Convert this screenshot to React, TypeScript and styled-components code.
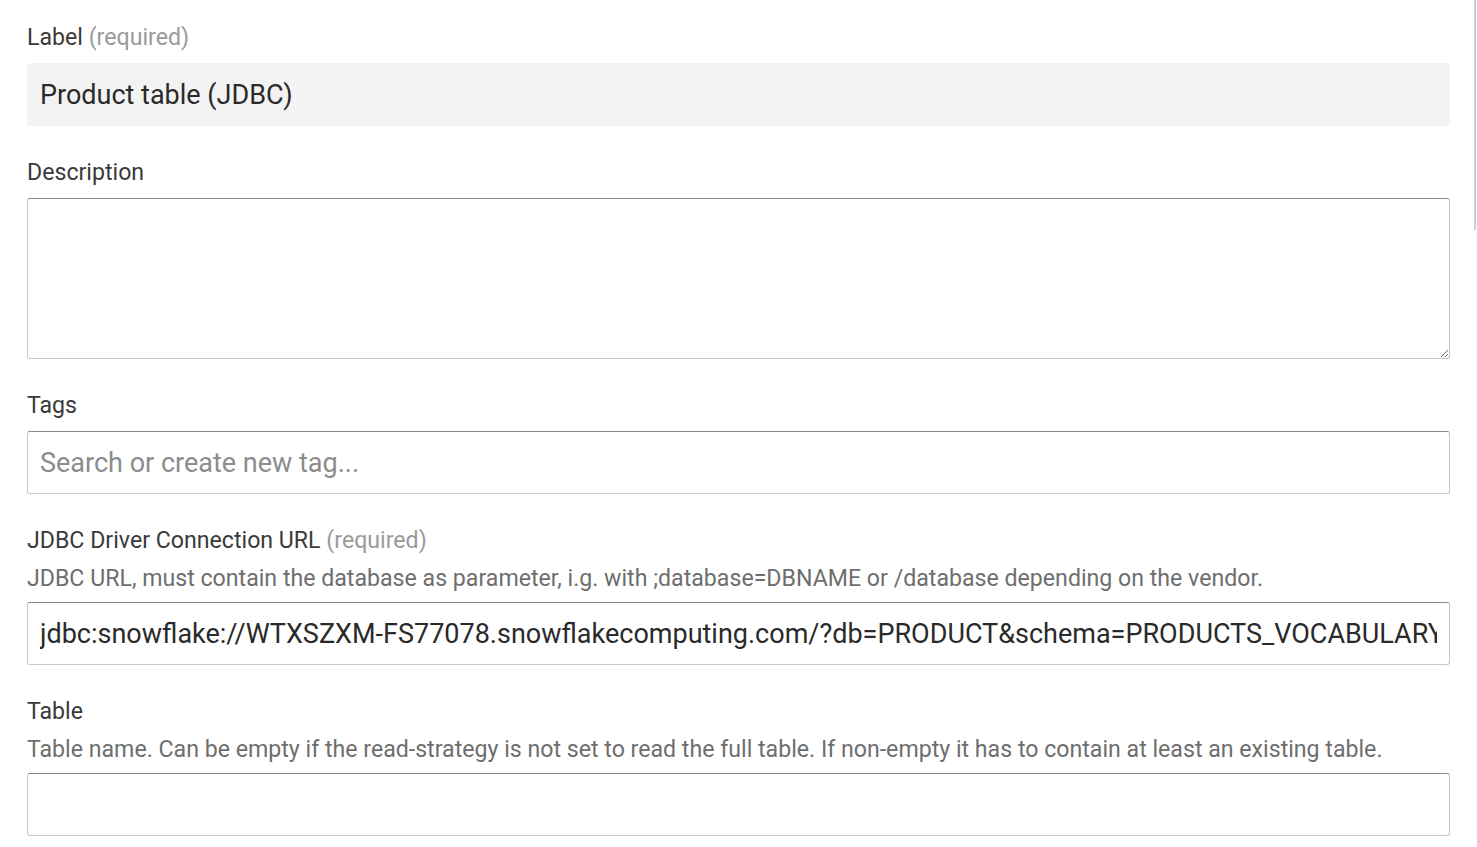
import React from "react";
import styled, { createGlobalStyle } from "styled-components";

const Global = createGlobalStyle`
  html, body { margin: 0; padding: 0; background: #ffffff; }
  body { font-family: Roboto, "Noto Sans", "Liberation Sans", sans-serif; overflow: hidden; }
  * { box-sizing: border-box; }
`;

const Page = styled.div`
  padding: 26px 27px 0 27px;
  display: flex;
  flex-direction: column;
  gap: 35px;
`;

const Field = styled.div`
  display: flex;
  flex-direction: column;
  gap: 13px;
`;

const FieldLabel = styled.label`
  font-size: 23.15px;
  line-height: 24px;
  color: #3a3a3a;
`;

const Required = styled.span`
  color: #9a9a9a;
`;

const Helper = styled.div`
  font-size: 23.15px;
  line-height: 24px;
  color: #6e6e6e;
  margin-top: 1px;
  margin-bottom: -2px;
`;

const baseInput = `
  width: 100%;
  font-family: Roboto, "Noto Sans", "Liberation Sans", sans-serif;
  font-size: 27px;
  color: #2a2a2a;
  padding: 0 12px;
  border-radius: 3px;
  outline: none;
  margin: 0;
`;

const TextInput = styled.input<{ $filled?: boolean }>`
  ${baseInput}
  height: 63px;
  background: ${(p) => (p.$filled ? "#f3f3f3" : "#ffffff")};
  border: 1px solid ${(p) => (p.$filled ? "#f3f3f3" : "#c6c6c6")};
  border-top-color: ${(p) => (p.$filled ? "#f3f3f3" : "#8a8a8a")};
  &::placeholder { color: #8c8c8c; }
`;

const TextArea = styled.textarea`
  ${baseInput}
  display: block;
  height: 161px;
  background: #ffffff;
  border: 1px solid #c6c6c6;
  border-top-color: #8a8a8a;
  resize: vertical;
`;

const ScrollThumb = styled.div`
  position: fixed;
  top: 0;
  right: 1px;
  width: 2px;
  height: 230px;
  background: #cccccc;
`;

export default function App() {
  return (
    <>
      <Global />
      <Page>
        <Field>
          <FieldLabel>
            Label <Required>(required)</Required>
          </FieldLabel>
          <TextInput $filled readOnly value="Product table (JDBC)" />
        </Field>
        <Field>
          <FieldLabel>Description</FieldLabel>
          <TextArea />
        </Field>
        <Field>
          <FieldLabel>Tags</FieldLabel>
          <TextInput placeholder="Search or create new tag..." />
        </Field>
        <Field>
          <FieldLabel>
            JDBC Driver Connection URL <Required>(required)</Required>
          </FieldLabel>
          <Helper>
            JDBC URL, must contain the database as parameter, i.g. with ;database=DBNAME or /database depending on the vendor.
          </Helper>
          <TextInput
            readOnly
            value="jdbc:snowflake://WTXSZXM-FS77078.snowflakecomputing.com/?db=PRODUCT&schema=PRODUCTS_VOCABULARY&warehouse=COMPUTE_WH"
          />
        </Field>
        <Field>
          <FieldLabel>Table</FieldLabel>
          <Helper>
            Table name. Can be empty if the read-strategy is not set to read the full table. If non-empty it has to contain at least an existing table.
          </Helper>
          <TextInput />
        </Field>
      </Page>
      <ScrollThumb />
    </>
  );
}
